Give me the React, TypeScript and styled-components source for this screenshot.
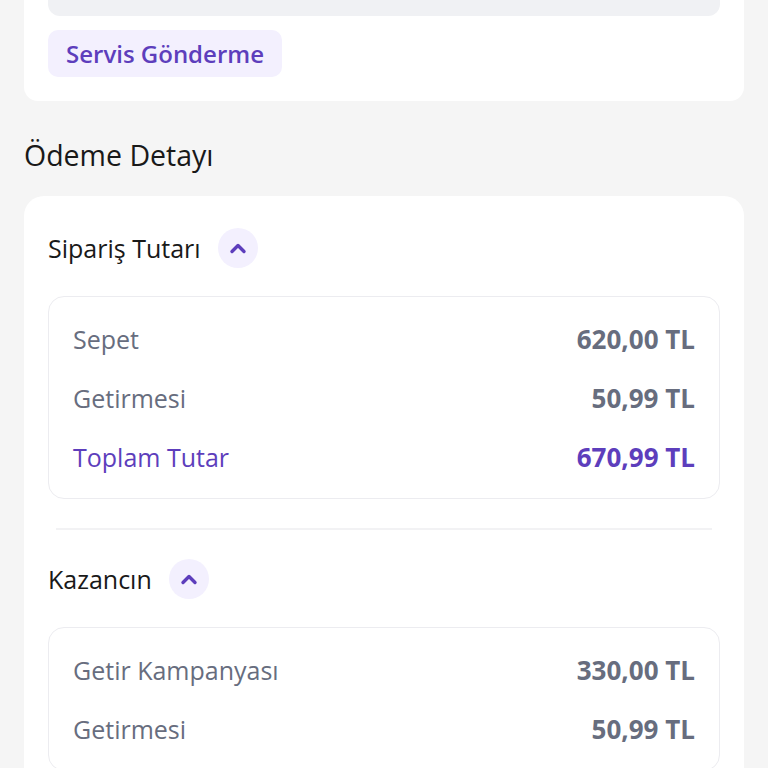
import * as React from 'react';
import styled, { createGlobalStyle } from 'styled-components';

const GlobalStyle = createGlobalStyle`
    body {
        margin: 0;
        background: #f5f5f5;
        font-family: "Open Sans", "Noto Sans", sans-serif;
    }
`;

const StyledPage = styled.div`
    padding: 0 24px 40px;
`;
const StyledCard = styled.section<{ $cut?: boolean }>`
    background: #ffffff;
    border-radius: ${p => (p.$cut ? '0 0 14px 14px' : '20px')};
    padding: ${p => (p.$cut ? '0 24px 24px' : '24px')};
`;
const StyledNoteBox = styled.div`
    height: 16px;
    background: #f0f1f4;
    border-radius: 0 0 12px 12px;
    margin-bottom: 14px;
`;
const StyledTag = styled.span`
    display: inline-flex;
    align-items: center;
    height: 47px;
    padding: 0 18px;
    border-radius: 10px;
    background: #f3f0fe;
    color: #5d3ebc;
    font-size: 24px;
    font-weight: 600;
`;
const StyledTitle = styled.h2`
    margin: 36px 0 23px;
    line-height: 36px;
    font-size: 28.5px;
    font-weight: 500;
    color: #191919;
`;
const StyledSectionHeader = styled.div`
    display: flex;
    align-items: center;
    gap: 17px;
    height: 56px;
    font-size: 25px;
    font-weight: 500;
    color: #191919;
`;
const StyledToggle = styled.button`
    display: flex;
    align-items: center;
    justify-content: center;
    width: 40px;
    height: 40px;
    padding: 0;
    border: none;
    border-radius: 50%;
    background: #f3f0fe;
    cursor: pointer;
`;
const StyledBox = styled.div`
    margin-top: 20px;
    padding: 12px 24px;
    border: 1px solid #ececf0;
    border-radius: 16px;
`;
const StyledRow = styled.div<{ $total?: boolean }>`
    display: flex;
    justify-content: space-between;
    align-items: center;
    height: 59px;
    font-size: 25px;
    font-weight: 500;
    color: ${p => (p.$total ? '#5d3ebc' : '#676d7e')};
`;
const StyledAmount = styled.span`
    font-size: 26px;
    font-weight: 700;
`;
const StyledDivider = styled.hr`
    margin: 29px 8px 21px;
    border: none;
    height: 2px;
    background: #f2f2f4;
`;

type Line = { label: string; amount: string; total?: boolean };

const ChevronUp = () => (
    <svg width="18" height="12" viewBox="0 0 18 12" fill="none">
        <path d="M3 9.5 L9 3.5 L15 9.5" stroke="#5d3ebc" strokeWidth="3.4" strokeLinecap="round" strokeLinejoin="round" />
    </svg>
);

const Section = ({ title, lines }: { title: string; lines: Line[] }) => (
    <div>
        <StyledSectionHeader>
            {title}
            <StyledToggle aria-label="toggle">
                <ChevronUp />
            </StyledToggle>
        </StyledSectionHeader>
        <StyledBox>
            {lines.map(line => (
                <StyledRow key={line.label} $total={line.total}>
                    <span>{line.label}</span>
                    <StyledAmount>{line.amount}</StyledAmount>
                </StyledRow>
            ))}
        </StyledBox>
    </div>
);

const order: Line[] = [
    { label: 'Sepet', amount: '620,00 TL' },
    { label: 'Getirmesi', amount: '50,99 TL' },
    { label: 'Toplam Tutar', amount: '670,99 TL', total: true },
];
const savings: Line[] = [
    { label: 'Getir Kampanyası', amount: '330,00 TL' },
    { label: 'Getirmesi', amount: '50,99 TL' },
];

export default function App() {
    return (
        <StyledPage>
            <GlobalStyle />
            <StyledCard $cut>
                <StyledNoteBox />
                <StyledTag>Servis Gönderme</StyledTag>
            </StyledCard>
            <StyledTitle>Ödeme Detayı</StyledTitle>
            <StyledCard>
                <Section title="Sipariş Tutarı" lines={order} />
                <StyledDivider />
                <Section title="Kazancın" lines={savings} />
            </StyledCard>
        </StyledPage>
    );
}
